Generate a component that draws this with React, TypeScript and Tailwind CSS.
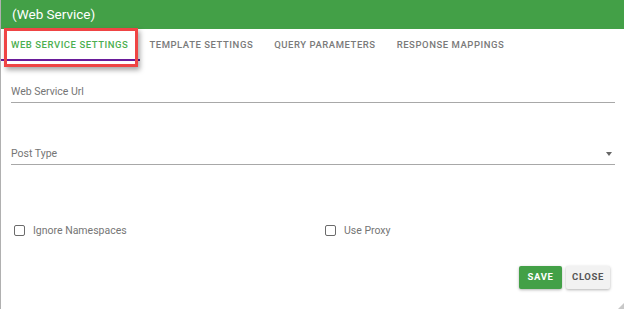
import { useState } from "react"

export default function App() {
    const [tab, setTab] = useState(0)
    const [ignoreNs, setIgnoreNs] = useState(false)
    const [useProxy, setUseProxy] = useState(false)

    const tabs = ["Web Service Settings", "Template Settings", "Query Parameters", "Response Mappings"]

    return (
        <div className="w-[624px] h-[309px] bg-white border-l border-[#b0b0b0] flex flex-col relative overflow-hidden font-['Roboto',sans-serif]">
            {/* Title bar */}
            <div className="h-[29px] bg-[#43a047] flex items-center px-[11px] text-white text-[13.5px] shrink-0">
                (Web Service)
            </div>

            {/* Tabs */}
            <div className="h-[33px] flex items-stretch shrink-0">
                {tabs.map((t, i) => (
                    <button
                        key={t}
                        onClick={() => setTab(i)}
                        className={
                            "relative pl-[10px] pr-[11px] text-[9.5px] font-medium uppercase tracking-[0.55px] " +
                            (i === tab ? "text-[#4caf50]" : "text-[#7a7a7a]")
                        }
                    >
                        {t}
                        {i === tab && (
                            <span className="absolute left-[-1px] right-[-1px] bottom-[1px] h-[2px] bg-[#6a1b9a]" />
                        )}
                    </button>
                ))}
            </div>

            <div className="absolute left-[3px] top-[28px] w-[134px] h-[39px] border-[3px] border-[#ef4444] shadow-[2px_3px_5px_rgba(0,0,0,0.35)] pointer-events-none" />

            {/* Form */}
            <div className="flex flex-col pl-[10px] pr-[9px]">
                <div className="mt-[23px] border-b border-[#a8a8a8] pb-[3px]">
                    <div className="text-[10.5px] text-[#757575] leading-[14px]">Web Service Url</div>
                </div>

                <div className="mt-[44px] border-b border-[#a8a8a8] pb-[3px] flex items-center justify-between">
                    <div className="text-[10.5px] text-[#757575] leading-[14px]">Post Type</div>
                    <span className="w-0 h-0 border-l-[3px] border-r-[3px] border-t-[4px] border-l-transparent border-r-transparent border-t-[#666] mr-[3px]" />
                </div>

                <div className="mt-[58px] flex items-center">
                    <label className="flex items-center w-[314px] cursor-pointer">
                        <span
                            onClick={() => setIgnoreNs(!ignoreNs)}
                            className={"ml-[3px] w-[11px] h-[11px] border-[1.5px] border-[#6b6b6b] rounded-[2px] " + (ignoreNs ? "bg-[#43a047]" : "")}
                        />
                        <span className="ml-[8px] text-[10.5px] text-[#757575]">Ignore Namespaces</span>
                    </label>
                    <label className="flex items-center cursor-pointer">
                        <span
                            onClick={() => setUseProxy(!useProxy)}
                            className={"w-[11px] h-[11px] border-[1.5px] border-[#6b6b6b] rounded-[2px] " + (useProxy ? "bg-[#43a047]" : "")}
                        />
                        <span className="ml-[8px] text-[10.5px] text-[#757575]">Use Proxy</span>
                    </label>
                </div>

                {/* Actions */}
                <div className="mt-[27px] flex justify-end gap-[4px] pr-[5px]">
                    <button className="w-[43px] h-[23px] bg-[#43a047] text-white text-[9.5px] font-bold tracking-[0.6px] rounded-[2px] shadow-[0_1px_3px_rgba(0,0,0,0.3)]">
                        SAVE
                    </button>
                    <button className="w-[44px] h-[23px] bg-[#f2f2f2] text-[#555] text-[9.5px] font-bold tracking-[0.6px] rounded-[2px] shadow-[0_1px_3px_rgba(0,0,0,0.3)]">
                        CLOSE
                    </button>
                </div>
            </div>

            {/* Resize grip */}
            <span className="absolute right-0 bottom-0 w-0 h-0 border-l-[6px] border-b-[6px] border-l-transparent border-b-[#c8c8c8]" />
        </div>
    )
}
